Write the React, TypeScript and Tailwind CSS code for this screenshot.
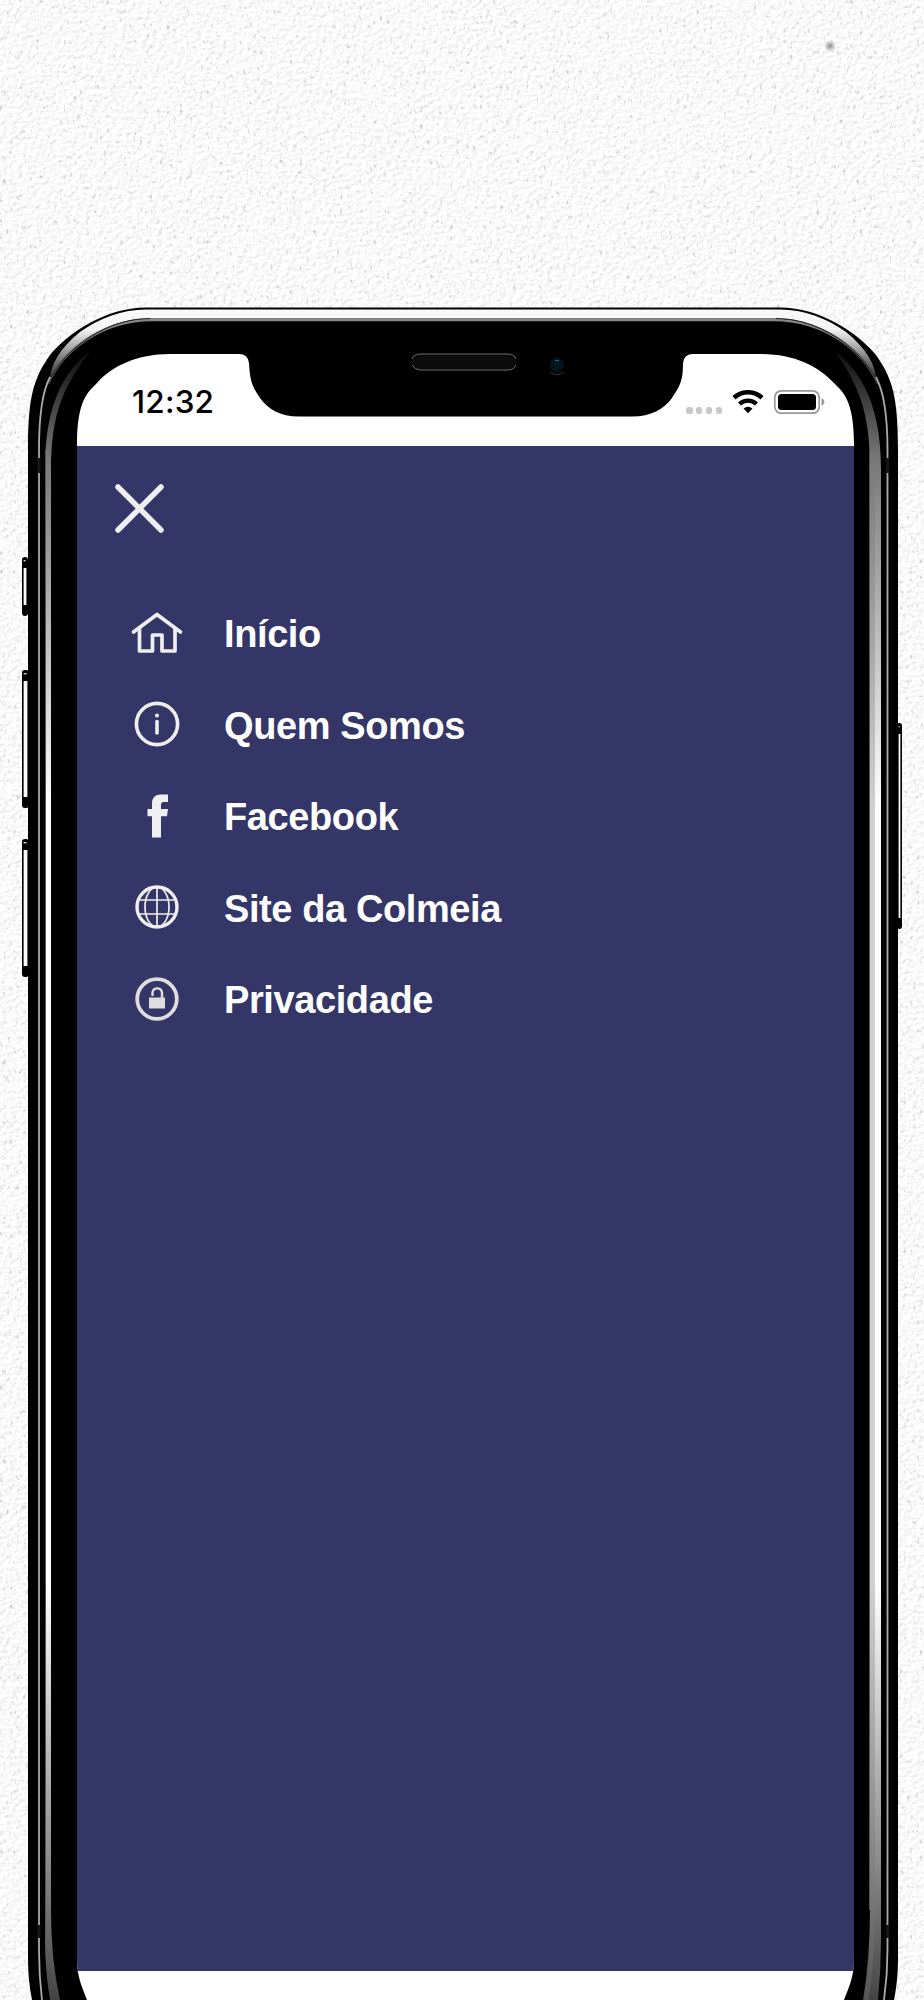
import type { ReactNode } from 'react'

const SCREEN =
  'M77 445 C77 400 88 392 97 383 C112 366 137 354 170 354 H239 Q248 354 249 363 C250 381 252 386 260 398 C268 409 280 416.5 299 416.5 H632 C651 416.5 664 409 672 398 C680 386 683 381 683 363 Q684 354 693 354 H761 C794 354 818 366 834 383 C843 392 854 400 854 445 V1960 C854 1975 850 1985 844 2000 H87 C81 1985 77 1975 77 1960 Z'

const BODY =
  'M28 450 C28 395 34 378 50 355 C68 333 106 307.5 146 307.5 H780 C820 307.5 858 333 876 355 C892 378 898 395 898 450 V1960 Q898 1980 894 2000 H32 Q28 1980 28 1960 Z'

function Wall() {
  return (
    <svg className="absolute inset-0" width="924" height="2000" aria-hidden="true">
      <defs>
        <filter id="plaster" x="0" y="0" width="100%" height="100%" colorInterpolationFilters="sRGB">
          <feTurbulence type="fractalNoise" baseFrequency="0.2 0.26" numOctaves="3" seed="8" />
          <feDiffuseLighting surfaceScale="0.3" diffuseConstant="1.135" lightingColor="#ffffff">
            <feDistantLight azimuth="225" elevation="60" />
          </feDiffuseLighting>
        </filter>
        <filter id="pores" x="0" y="0" width="100%" height="100%" colorInterpolationFilters="sRGB">
          <feTurbulence type="fractalNoise" baseFrequency="0.3 0.2" numOctaves="2" seed="21" />
          <feColorMatrix values="0 0 0 0 0.62  0 0 0 0 0.62  0 0 0 0 0.62  2.6 0 0 0 -1.62" />
        </filter>
        <radialGradient id="speck">
          <stop offset="0" stopColor="#8a8a8a" />
          <stop offset="1" stopColor="#8a8a8a" stopOpacity="0" />
        </radialGradient>
      </defs>
      <rect width="924" height="2000" filter="url(#plaster)" />
      <rect width="924" height="2000" filter="url(#pores)" opacity="0.8" />
      <circle cx="830" cy="46" r="6" fill="url(#speck)" />
    </svg>
  )
}

function SideButton({ x, y, h, w }: { x: number; y: number; h: number; w: number }) {
  return (
    <g>
      <rect x={x} y={y} width={w} height={h} rx="3" fill="#000" />
      <rect x={x + 1.6} y={y + 3} width={w - 4} height="1.4" fill="#ccc" />
      <rect x={x + 1.6} y={y + 11} width={w - 3.2} height={h - 22} fill="#fafafa" />
    </g>
  )
}

function PhoneFrame() {
  return (
    <svg className="pointer-events-none absolute inset-0" width="924" height="2000" aria-hidden="true">
      <defs>
        <linearGradient id="strip" gradientUnits="userSpaceOnUse" x1="0" y1="340" x2="0" y2="2000">
          <stop offset="0" stopColor="#000" />
          <stop offset="0.03" stopColor="#333" />
          <stop offset="0.07" stopColor="#777" />
          <stop offset="0.15" stopColor="#aaa" />
          <stop offset="0.28" stopColor="#fff" />
          <stop offset="0.75" stopColor="#fff" />
          <stop offset="0.92" stopColor="#888" />
          <stop offset="1" stopColor="#444" />
        </linearGradient>
        <linearGradient id="rim" gradientUnits="userSpaceOnUse" x1="0" y1="307" x2="0" y2="382">
          <stop offset="0" stopColor="#fafafa" />
          <stop offset="0.3" stopColor="#f4f4f4" />
          <stop offset="0.65" stopColor="#888" />
          <stop offset="1" stopColor="#222" />
        </linearGradient>
        <linearGradient id="edge" gradientUnits="userSpaceOnUse" x1="0" y1="318" x2="0" y2="400">
          <stop offset="0" stopColor="#888" />
          <stop offset="1" stopColor="#333" />
        </linearGradient>
      </defs>
      <path fillRule="evenodd" d={`${BODY} ${SCREEN}`} fill="#000" />

      {/* polished top rim */}
      <path
        d="M50 380 C50 365 60 348 80 332 C100 318 122 309.5 146 309.5 H780 C804 309.5 826 318 846 332 C866 348 876 365 876 380 C866 355 828 318 774 318.5 H152 C98 318 60 355 50 380 Z"
        fill="url(#rim)"
      />
      <path
        d="M48 384 C62 352 100 320 153 320 H773 C826 320 864 352 878 384"
        fill="none"
        stroke="url(#edge)"
        strokeWidth="2.6"
      />
      <path d="M42 400 C50 360 100 318 150 318.5 M884 400 C876 360 826 318 776 318.5" fill="none" stroke="#222" />

      {/* thin antenna lines */}
      <path
        d="M42 2000 Q39 1975 39 1950 V450 C39 415 42 392 50 377 M884 2000 Q887.500 1975 887.500 1950 V450 C887.500 415 884 392 876 377"
        fill="none"
        stroke="#aaa"
        strokeWidth="1.800"
      />
      <path d="M39 458 V473 M887.500 458 V473 M39 1925 V1938 M887.500 1925 V1938" stroke="#161616" strokeWidth="3" />

      {/* side reflections */}
      <path d="M45 470 C45 420 55 378 91 350 C65 385 51 410 51 470 V1910 Q51 1960 60 2000 H50 Q45 1970 45 1940 Z" fill="url(#strip)" />
      <path d="M881 470 C881 420 870 378 834 350 C858 385 870 410 870 470 V1910 Q870 1960 863 2000 H878 Q881 1970 881 1940 Z" fill="url(#strip)" />
      <path d="M872.500 480 V1910 Q872.500 1960 866 2000" fill="none" stroke="#777" strokeWidth="5" opacity="0.35" />
      <path d="M45.500 450 V1940 M869.500 450 V1910" stroke="#555" />

      <SideButton x={22} y={557} w={6} h={59} />
      <SideButton x={22} y={670} w={7} h={138} />
      <SideButton x={22} y={839} w={7} h={138} />
      <SideButton x={897} y={723} w={5} h={206} />

      {/* earpiece and camera */}
      <rect x="411.500" y="354" width="104.500" height="16" rx="8" fill="#0b0b0b" />
      <path d="M412 359 Q414 354 420 354 H508 Q514 354 516 359 M412 365 Q415 370 420 370 H508 Q514 370 516 365" fill="none" stroke="#777" strokeWidth="0.9" />
      <circle cx="557" cy="365" r="7" fill="#02141c" />
      <path d="M555 360.500 H559" stroke="#086a8c" strokeWidth="1.3" />
      <path d="M550 372 Q557 377 564 372" fill="none" stroke="#333" />
    </svg>
  )
}

function StatusBar() {
  return (
    <header className="flex h-[92px] items-center bg-white pt-[8px] pr-[29px] pl-[55px]">
      <time className="mt-[-5px] font-['Inter'] text-[31.500px] leading-none font-medium tracking-[0.200px] text-black">12:32</time>
      <div className="ml-auto flex items-center">
        <div className="mt-[13px] mr-[10px] flex gap-[3.300px]">
          {[0, 1, 2, 3].map((dot) => (
            <i key={dot} className="size-[6.500px] rounded-[2.500px] bg-[#c9c9c9]" />
          ))}
        </div>
        <svg className="mt-[-4px] mr-[10px]" width="32" height="24" viewBox="0 0 32 24">
          <path d="M2 7.800 A20.500 20.500 0 0 1 30 7.800" fill="none" stroke="#000" strokeWidth="4.600" />
          <path d="M7.500 14 A12.500 12.500 0 0 1 24.500 14" fill="none" stroke="#000" strokeWidth="4.200" />
          <path d="M11.500 18.500 Q16 15 20.500 18.500 L16 23.200 Z" fill="#000" />
        </svg>
        <svg className="mt-[-4px]" width="51" height="24" viewBox="0 0 51 24">
          <rect x="0.800" y="0.800" width="44.400" height="22.400" rx="6.500" fill="none" stroke="#999" strokeWidth="1.700" />
          <rect x="4" y="4" width="38" height="16" rx="3.500" />
          <path d="M47.500 8 Q50.500 9.500 50.500 12 Q50.500 14.500 47.500 16 Z" fill="#999" />
        </svg>
      </div>
    </header>
  )
}

const ITEMS: { label: string; icon: ReactNode }[] = [
  {
    label: 'Início',
    icon: (
      <g fill="none" stroke="#efefef" strokeWidth="3.700" strokeLinecap="round" strokeLinejoin="round">
        <path d="M4.500 27 L28 9.500 L51.500 27" />
        <path d="M10.500 23.500 V46 H23.500 V30 H33 V46 H46 V23.500" />
      </g>
    ),
  },
  {
    label: 'Quem Somos',
    icon: (
      <g>
        <circle cx="28" cy="28" r="20.600" fill="none" stroke="#efefef" strokeWidth="3.600" />
        <circle cx="28" cy="19.500" r="2" fill="#efefef" />
        <path d="M28 25.500 V37" stroke="#efefef" strokeWidth="3.600" strokeLinecap="round" />
      </g>
    ),
  },
  {
    label: 'Facebook',
    icon: (
      <path
        d="M23 49.500 V28.200 H18.500 V21 H23 V15.500 Q23 6.500 32 6.500 H39 V14 H34.500 Q32 14 32 17 V21 H39 L38 28.200 H32 V49.500 Z"
        fill="#efefef"
      />
    ),
  },
  {
    label: 'Site da Colmeia',
    icon: (
      <g fill="none" stroke="#efefef" strokeWidth="1.700">
        <circle cx="28" cy="28" r="20" strokeWidth="3.400" />
        <ellipse cx="28" cy="28" rx="12" ry="20" />
        <path d="M28 8 V48 M11 21 H45 M11 35 H45" />
      </g>
    ),
  },
  {
    label: 'Privacidade',
    icon: (
      <g>
        <circle cx="28" cy="28" r="19.800" fill="none" stroke="#dedede" strokeWidth="3.800" />
        <rect x="20" y="26.500" width="16" height="11" fill="#dedede" />
        <path d="M23.500 25 V21.500 A4.800 4.800 0 0 1 33 21.500 V27" fill="none" stroke="#dedede" strokeWidth="2.400" />
      </g>
    ),
  },
]

function MenuItem({ label, icon }: { label: string; icon: ReactNode }) {
  return (
    <a href="#" className="flex h-[91.500px] items-center">
      <svg width="56" height="56" viewBox="0 0 56 56" aria-hidden="true">
        {icon}
      </svg>
      <span className="mt-[3px] ml-[39px] font-['Liberation_Sans'] text-[38px] leading-none font-bold tracking-[-0.400px] whitespace-nowrap text-white">
        {label}
      </span>
    </a>
  )
}

export default function App() {
  return (
    <div className="relative h-[2000px] w-[924px] overflow-hidden bg-[#f7f7f7]">
      <Wall />
      {/* rounded corners and notch come from the clip */}
      <div className="relative h-full" style={{ clipPath: `path('${SCREEN}')` }}>
        <div className="flex h-full flex-col bg-white pt-[354px] pr-[70px] pl-[77px]">
          <StatusBar />
          <main className="h-[1525px] shrink-0 bg-[#333667] pl-[36px]">
            <button type="button" aria-label="Fechar" className="block pt-[36px]">
              <svg width="52" height="52" viewBox="0 0 52 52">
                <path d="M5 5 L48 48 M48 5 L5 48" fill="none" stroke="#efefef" strokeWidth="5.500" strokeLinecap="round" />
              </svg>
            </button>
            <nav className="mt-[53px] ml-[16px]">
              {ITEMS.map((item) => (
                <MenuItem key={item.label} {...item} />
              ))}
            </nav>
          </main>
        </div>
      </div>
      <PhoneFrame />
    </div>
  )
}
